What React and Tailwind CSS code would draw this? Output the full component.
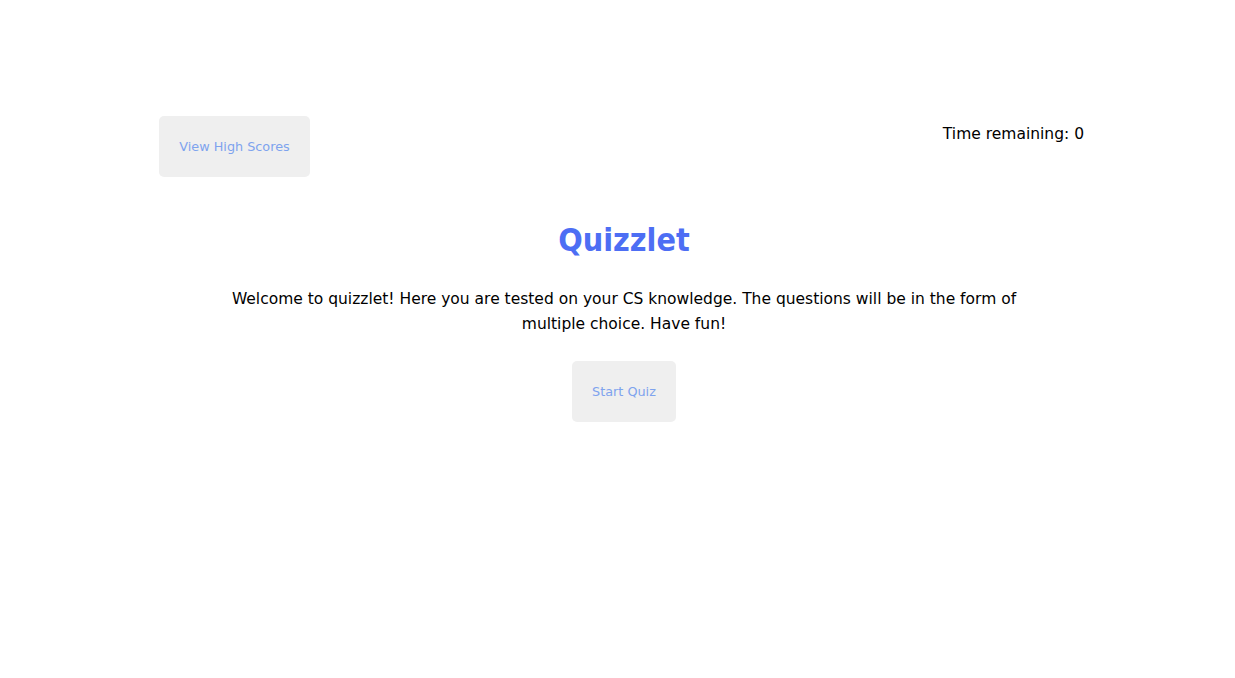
export default function App() {
  return (
    <div className="min-h-screen bg-white font-['DejaVu_Sans',sans-serif] text-black">
      <div className="ml-[159px] w-[930px] pt-[116px]">
        <header className="flex items-start justify-between">
          <button className="h-[61px] w-[151px] rounded-[5px] bg-[#efefef] text-[12.8px] text-[#7ea3ee]">
            View High Scores
          </button>
          <p className="mt-[7px] mr-[5px] text-[15.5px]">Time remaining: 0</p>
        </header>
        <main className="flex flex-col items-center text-center">
          <h1 className="mt-[39px] font-['DejaVu_Sans_Condensed',sans-serif] text-[32px] font-bold text-[#4d6ef4]">
            Quizzlet
          </h1>
          <p className="mt-[23px] w-[800px] text-[15.5px] leading-[25px]">
            Welcome to quizzlet! Here you are tested on your CS knowledge. The questions will be in the form of multiple choice. Have fun!
          </p>
          <button className="mt-[24px] h-[61px] w-[104px] rounded-[5px] bg-[#efefef] text-[12.8px] text-[#7ea3ee]">
            Start Quiz
          </button>
        </main>
      </div>
    </div>
  )
}
